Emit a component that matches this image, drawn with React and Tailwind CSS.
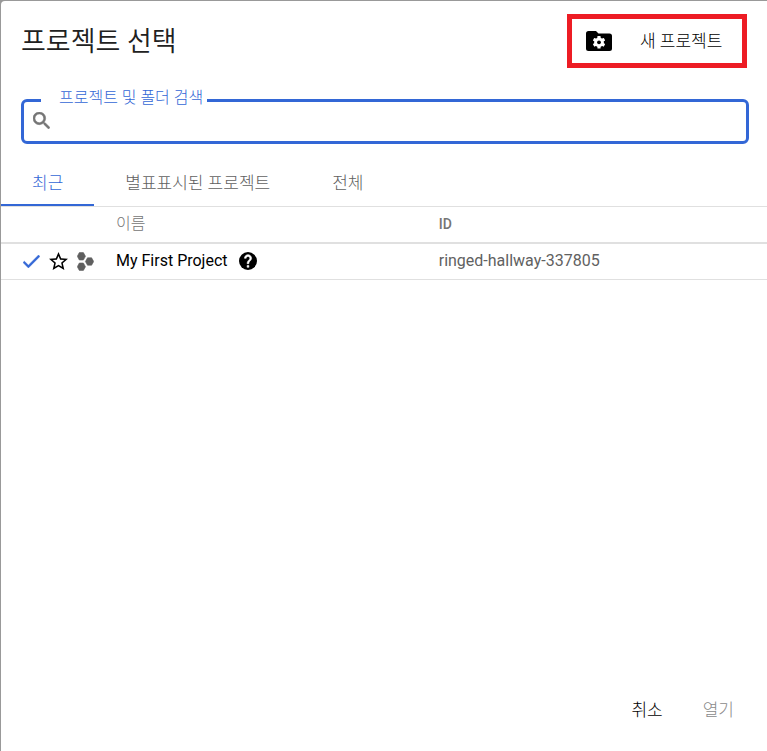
import { useState } from 'react';

const tabs = [
  { id: 'recent', label: '최근' },
  { id: 'starred', label: '별표표시된 프로젝트' },
  { id: 'all', label: '전체' },
];

const projects = [{ id: 'ringed-hallway-337805', name: 'My First Project' }];

function FolderIcon() {
  return (
    <svg viewBox="0 0 26 20" className="h-5 w-[26px]" aria-hidden="true">
      <path d="M2.5 0H10l2.500 2.500h11A2.500 2.500 0 0 1 26 5v12.500a2.500 2.500 0 0 1-2.500 2.500h-21A2.500 2.500 0 0 1 0 17.500v-15A2.500 2.500 0 0 1 2.500 0z" fill="#000" />
      <g transform="translate(13 11.3)">
        <circle r="4.8" fill="#fff" />
        <g fill="#fff">
          <rect x="-1.6" y="-6.3" width="3.2" height="12.6" rx="0.6" />
          <rect x="-1.6" y="-6.3" width="3.2" height="12.6" rx="0.6" transform="rotate(60)" />
          <rect x="-1.6" y="-6.3" width="3.2" height="12.6" rx="0.6" transform="rotate(120)" />
        </g>
        <circle r="1.9" fill="#000" />
      </g>
    </svg>
  );
}

function SearchIcon() {
  return (
    <svg viewBox="3 3 17.5 17.5" className="size-[17px] shrink-0" fill="#757575" stroke="#757575" strokeWidth="0.6" aria-hidden="true">
      <path d="M15.5 14h-.79l-.28-.27A6.471 6.471 0 0 0 16 9.5 6.5 6.5 0 1 0 9.5 16c1.610 0 3.090-.59 4.230-1.570l.27.28v.79l5 4.990L20.490 19l-4.990-5zm-6 0C7.010 14 5 11.990 5 9.500S7.010 5 9.500 5 14 7.010 14 9.500 11.990 14 9.500 14z" />
    </svg>
  );
}

function CheckIcon() {
  return (
    <svg viewBox="3.4 5.5 17.7 13.6" className="h-[13px] w-[17px]" fill="#3367d6" stroke="#3367d6" strokeWidth="0.6" aria-label="선택됨">
      <path d="M9 16.170L4.830 12l-1.420 1.410L9 19 21 7l-1.410-1.410z" />
    </svg>
  );
}

function StarIcon() {
  return (
    <svg viewBox="2 2 20 19" className="h-[18px] w-[19px]" fill="#000" aria-hidden="true">
      <path d="M22 9.240l-7.190-.62L12 2 9.190 8.630 2 9.240l5.460 4.730L5.820 21 12 17.270 18.180 21l-1.630-7.030L22 9.240zM12 15.400l-3.760 2.270 1-4.280-3.320-2.880 4.380-.38L12 6.100l1.710 4.040 4.380.38-3.320 2.880 1 4.280L12 15.400z" />
    </svg>
  );
}

function ProjectIcon() {
  return (
    <svg viewBox="0 0 17 19" className="h-[19px] w-[17px]" fill="#5f5f5f" stroke="#5f5f5f" strokeWidth="0.6" strokeLinejoin="round" aria-hidden="true">
      <path d="M2.300.6h4.100l2.100 3.700-2.100 3.700H2.300L.3 4.300z" />
      <path d="M10.500 5.800h4.100l2.100 3.700-2.100 3.700h-4.100L8.400 9.500z" />
      <path d="M2.300 11h4.100l2.100 3.700-2.100 3.700H2.300L.3 14.700z" />
    </svg>
  );
}

function HelpIcon() {
  return (
    <svg viewBox="2 2 20 20" className="size-[18px]" aria-hidden="true">
      <circle cx="12" cy="12" r="10" fill="#000" />
      <path
        fill="#fff"
        stroke="#fff"
        strokeWidth="0.6"
        d="M13 19h-2v-2h2v2zm2.070-7.750l-.9.920C13.450 12.900 13 13.500 13 15h-2v-.5c0-1.100.45-2.100 1.170-2.830l1.240-1.260c.37-.36.59-.86.59-1.410 0-1.100-.9-2-2-2s-2 .9-2 2H8c0-2.210 1.790-4 4-4s4 1.790 4 4c0 .88-.36 1.680-.93 2.250z"
      />
    </svg>
  );
}

export default function App() {
  const [activeTab, setActiveTab] = useState('recent');
  const [query, setQuery] = useState('');

  return (
    <div className="min-h-screen flex bg-[#999] pt-px pl-px font-['Roboto','Noto_Sans_CJK_KR',sans-serif]">
      <main className="flex flex-1 flex-col rounded-tl-sm bg-white">
        <header className="flex items-center justify-between px-5 pt-[13px]">
          <h1 className="pt-0.5 text-[27px] leading-8 font-[350] text-[#212121]">프로젝트 선택</h1>
          <button className="flex h-[54px] w-[180px] items-center border-5 border-[#ed1c24] pl-[14px] text-[17px] font-light text-black">
            <FolderIcon />
            <span className="pt-0.5 pl-7">새 프로젝트</span>
          </button>
        </header>

        <fieldset className="mr-[18px] ml-5 mt-5 rounded-md border-3 border-[#3367d6] pl-[17px]">
          <legend className="pr-1 pb-1 pl-[18px] text-base leading-5 font-light text-[#3367d6]">
            <label htmlFor="search">프로젝트 및 폴더 검색</label>
          </legend>
          <div className="-ml-2 flex items-center pb-3">
            <SearchIcon />
            <input
              id="search"
              type="text"
              value={query}
              onChange={(e) => setQuery(e.target.value)}
              className="h-4 flex-1 px-3 text-base outline-none"
            />
          </div>
        </fieldset>

        <nav className="flex border-b border-[#e0e0e0] pt-[19px]">
          {tabs.map((tab) => (
            <button
              key={tab.id}
              onClick={() => setActiveTab(tab.id)}
              className={
                tab.id === activeTab
                  ? 'h-[43px] border-b-2 border-[#3367d6] px-[31px] text-[17px] font-light text-[#3367d6]'
                  : 'h-[43px] border-b-2 border-transparent px-[31px] text-[17px] font-light text-[#616161]'
              }
            >
              {tab.label}
            </button>
          ))}
        </nav>

        <table className="w-full table-fixed border-collapse text-left">
          <thead>
            <tr className="h-9 border-b-2 border-[#e0e0e0] text-[#757575]">
              <th className="w-[115px]"></th>
              <th className="w-[42%] pb-0.5 text-base leading-5 font-light">이름</th>
              <th className="pb-0.5 pl-px text-sm leading-5 font-medium">ID</th>
            </tr>
          </thead>
          <tbody>
            {projects.map((project) => (
              <tr key={project.id} className="h-9 border-b border-[#e0e0e0] text-base leading-5">
                <td className="pl-[22px]">
                  <div className="flex items-center gap-[9px]">
                    <CheckIcon />
                    <button aria-label="별표">
                      <StarIcon />
                    </button>
                    <ProjectIcon />
                  </div>
                </td>
                <td>
                  <div className="flex items-center gap-[11px]">
                    <a href="#" className="text-black">
                      {project.name}
                    </a>
                    <HelpIcon />
                  </div>
                </td>
                <td className="pl-px text-[#616161]">{project.id}</td>
              </tr>
            ))}
          </tbody>
        </table>

        <footer className="mt-auto flex justify-end gap-2 pr-[17px] pb-[22px] text-[17px] font-light">
          <button className="h-9 px-4 text-black">취소</button>
          <button disabled className="h-9 px-4 text-[#8a8a8a]">
            열기
          </button>
        </footer>
      </main>
    </div>
  );
}
